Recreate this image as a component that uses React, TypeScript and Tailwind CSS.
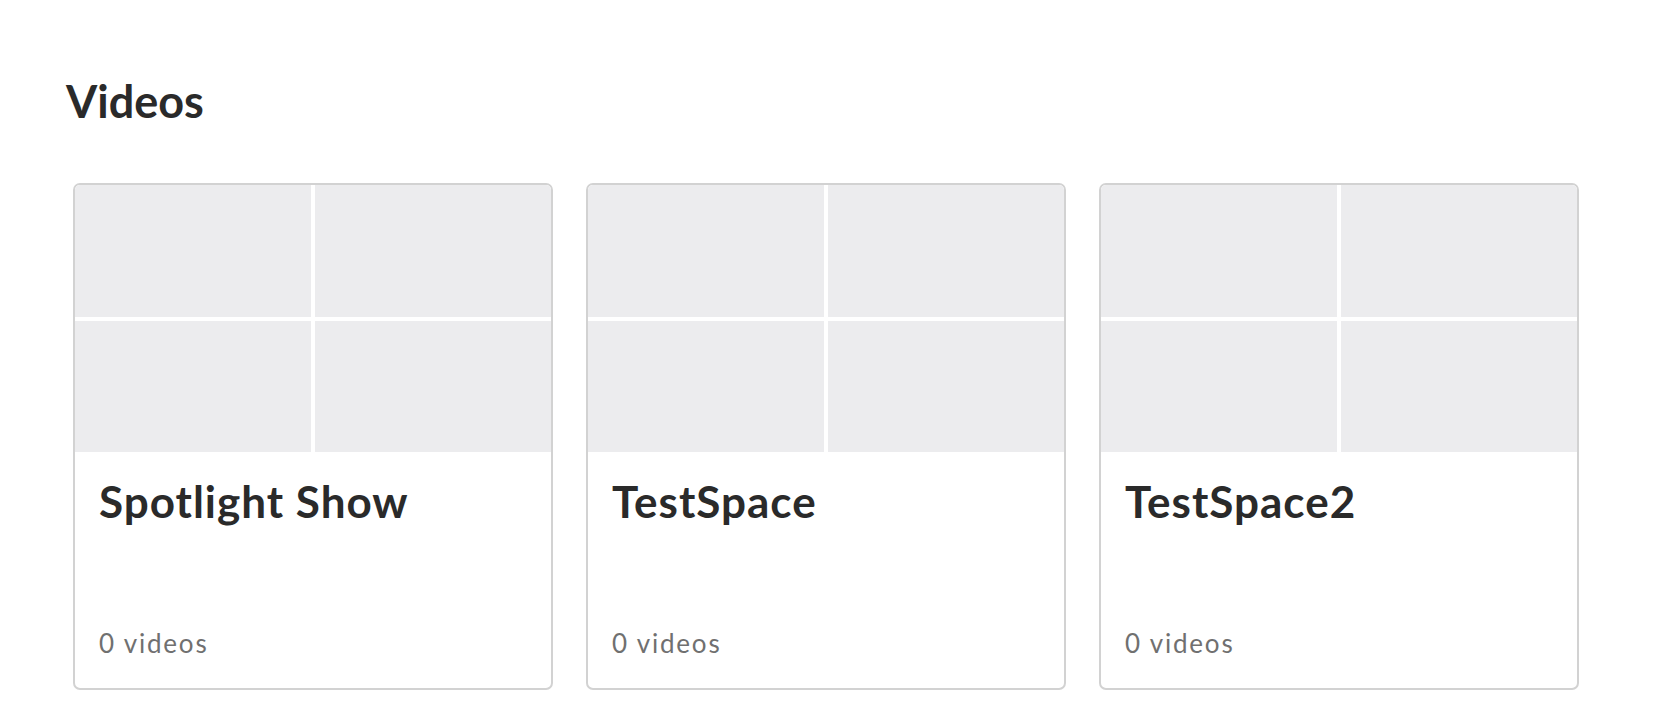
const spaces = [
  { name: "Spotlight Show", count: 0 },
  { name: "TestSpace", count: 0 },
  { name: "TestSpace2", count: 0 },
];

const SpaceCard = ({ name, count }: { name: string; count: number }) => {
  return (
    <div className="w-[480px] h-[507px] border-2 border-[#d2d2d2] rounded-[7px] overflow-hidden bg-white flex flex-col">
      <div className="grid grid-cols-2 grid-rows-2 gap-1 h-[267px] bg-white">
        <div className="bg-[#ececee]"></div>
        <div className="bg-[#ececee]"></div>
        <div className="bg-[#ececee]"></div>
        <div className="bg-[#ececee]"></div>
      </div>
      <div className="flex-1 flex flex-col justify-between px-6 pt-[27px] pb-[32px]">
        <h3 className="text-[44px] leading-none font-bold tracking-[1px] text-[#2a2a2a]">{name}</h3>
        <p className="text-[26px] leading-none tracking-[1.8px] text-[#707070]">{count} videos</p>
      </div>
    </div>
  );
};

export default function App() {
  return (
    <div className="min-h-screen bg-white font-['Lato',sans-serif]">
      <div className="pt-[79px] pl-[66px]">
        <h1 className="text-[45px] leading-none font-bold text-[#2a2a2a]">Videos</h1>
      </div>
      <div className="flex gap-[33px] pl-[73px] mt-[59px]">
        {spaces.map((s) => (
          <SpaceCard key={s.name} name={s.name} count={s.count} />
        ))}
      </div>
    </div>
  );
}
